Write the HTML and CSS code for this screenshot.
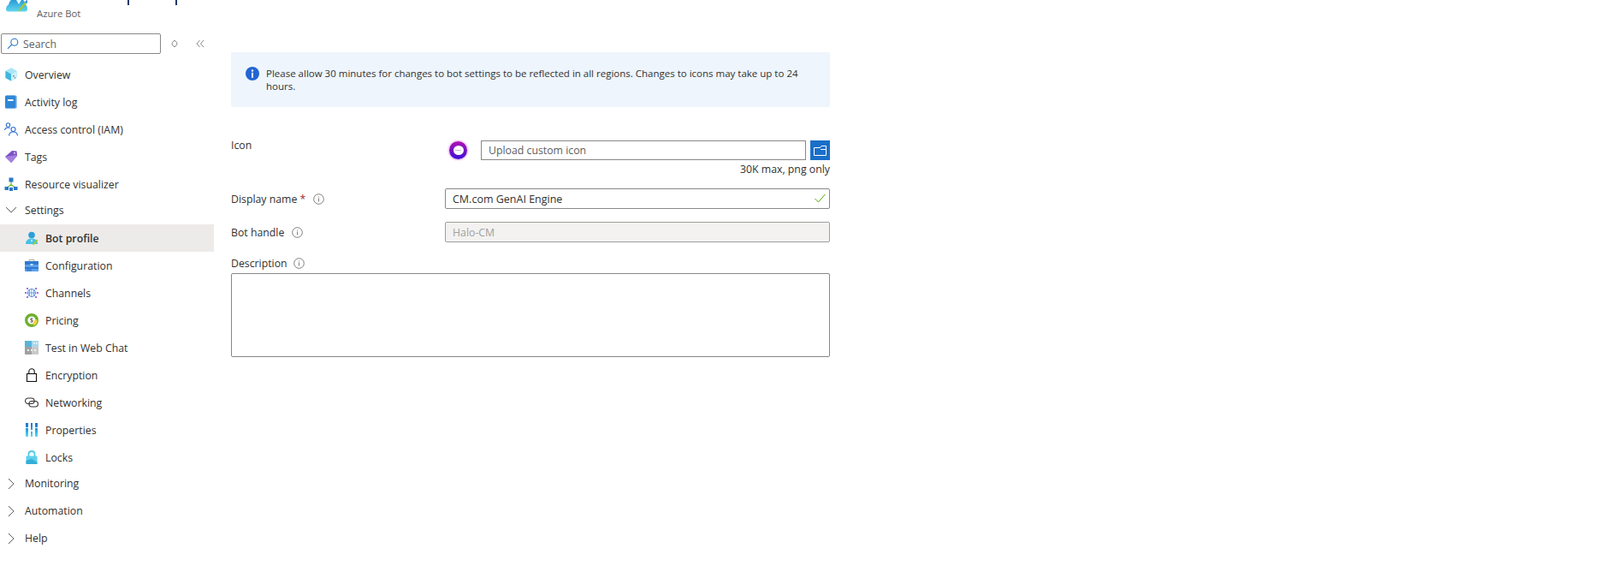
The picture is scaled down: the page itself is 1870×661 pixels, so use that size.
FILE: index.html
```html
<!DOCTYPE html>
<html lang="en">
<head>
<meta charset="utf-8">
<title>Bot profile</title>
<link rel="stylesheet" href="styles.css">
</head>
<body>
<div class="page">
  <aside class="sidebar">
    <div class="ticks"><i class="tick t1"></i><i class="tick t2"></i></div>
    <svg class="logo" width="25" height="14" viewBox="0 0 25 14">
      <defs><linearGradient id="lg" x1="0" y1="0" x2="0" y2="1"><stop offset="0" stop-color="#2a9bd6"/><stop offset="1" stop-color="#62d6ef"/></linearGradient></defs>
      <path d="M2.500 13.500C.5 13.500 0 12 0 10.500 0 8 1.500 6.500 3 5.500 3.500 3 4.500 1 6 0h14c1.500 1 2.500 3 3 5.500 1.500 1 2 3 2 5 0 1.500-.5 3-2.500 3z" fill="url(#lg)"/>
      <path d="M12 0l3 5 3-5z" fill="#e8f8fc"/>
      <path d="M15 11l7-8.500 2 1.800-7 8-2.500.8z" fill="#9ccb3b"/>
      <path d="M22 2.500L24 0l1 .5v2.500l-1 1.300z" fill="#3a8fd8"/>
    </svg>
    <div class="subtitle">Azure Bot</div>
    <div class="search-row">
      <div class="search">
        <svg width="14" height="14" viewBox="0 0 14 14" fill="none" stroke="#2b78c5" stroke-width="1.1"><circle cx="8.8" cy="5.2" r="4"/><path d="M5.8 8L1 12.8"/></svg>
        <span>Search</span>
      </div>
      <svg class="updown" width="8" height="10" viewBox="0 0 8 10" fill="none" stroke="#8a8886"><path d="M4 1L1.200 4v2L4 9l2.800-3V4z"/></svg>
      <svg class="collapse" width="10" height="10" viewBox="0 0 10 10" fill="none" stroke="#8a8886"><path d="M4.500 1L1 5l3.500 4M9 1L5.500 5 9 9"/></svg>
    </div>
    <nav class="nav">
      <a class="item">
        <svg width="16" height="16" viewBox="0 0 16 16"><path d="M8 .5l6.500 3.500v8L8 15.500 1.500 12V4z" fill="#7fd6ee"/><path d="M8 .5L14.500 4 8 7.500 1.500 4z" fill="#a9e6f5"/><path d="M8 7.500L14.500 4v8L8 15.500z" fill="#cdf0f8"/><path d="M1.500 4L8 7.500v8L1.500 12z" fill="#3fb6de"/><path d="M10 9h1.500v1.500H10zM12 11h1v1.500h-1z" fill="#7a7a7a"/></svg>
        <span>Overview</span>
      </a>
      <a class="item">
        <svg width="16" height="16" viewBox="0 0 16 16"><rect x="1" y="0.500" width="14" height="15" rx="1.500" fill="#9fc9ec"/><rect x="1" y="0.500" width="12.500" height="15" rx="1.500" fill="#2f87d6"/><rect x="4" y="5" width="6.500" height="2" fill="#fff"/></svg>
        <span>Activity log</span>
      </a>
      <a class="item">
        <svg width="16" height="16" viewBox="0 0 16 16" fill="none" stroke="#2e6fd0" stroke-width="1.100"><circle cx="4.500" cy="3" r="2.200"/><path d="M0.500 9c.3-2 2-3 4-3 .8 0 1.500.2 2 .5"/><circle cx="10.500" cy="8" r="2.500"/><path d="M5.500 15.500c.2-2.800 2.300-4.500 5-4.500s4.800 1.700 5 4.500"/></svg>
        <span>Access control (IAM)</span>
      </a>
      <a class="item">
        <svg width="16" height="16" viewBox="0 0 16 16"><path d="M1 8l8-7 5.500 0.500 0.500 5.500-7 8z" fill="#7b52c4"/><path d="M1 8l7.500 7 6.500-8-1-1z" fill="#a37fe0"/><circle cx="12" cy="3.800" r="1" fill="#e6dcf7"/></svg>
        <span>Tags</span>
      </a>
      <a class="item">
        <svg width="16" height="16" viewBox="0 0 16 16" fill="none"><path d="M8 4v6M8 8.500L3 12.500M8 8.500l5 4" stroke="#76bc2d" stroke-width="1.200"/><rect x="5.500" y="0.500" width="5" height="5" fill="#2b79c9"/><rect x="0.500" y="11" width="4.500" height="4" fill="#2b79c9"/><rect x="6" y="12" width="4" height="4" fill="#2b79c9"/><rect x="11" y="11" width="4.500" height="4" fill="#2b79c9"/></svg>
        <span>Resource visualizer</span>
      </a>
      <a class="item section">
        <svg width="16" height="16" viewBox="0 0 16 16" fill="none" stroke="#605e5c"><path d="M2 5l6 6 6-6"/></svg>
        <span>Settings</span>
      </a>
      <a class="item sub active">
        <svg width="16" height="16" viewBox="0 0 16 16"><circle cx="8" cy="4.500" r="3.800" fill="#2aa0d8"/><path d="M1 15c0-4 2.500-6.500 7-6.500s7 2.500 7 6.500z" fill="#45c2e8"/><path d="M7 10l1 3.500 1-3.500z" fill="#eaf8fc"/><path d="M9.500 14.500l4.500-5 1.500 1.300-4.500 5-2 .5z" fill="#9ccb3b"/></svg>
        <span>Bot profile</span>
      </a>
      <a class="item sub">
        <svg width="16" height="16" viewBox="0 0 16 16"><path d="M5 3.500V1.500h6v2" fill="none" stroke="#a9a9a9"/><rect y="3" width="16" height="12" fill="#5aa0ee"/><rect y="3" width="16" height="4" fill="#2f79cf"/><rect y="10" width="16" height="2" fill="#2f79cf"/><rect y="12" x="2" width="6" height="3" fill="#3d86da"/><rect x="6.500" y="6" width="3" height="2" fill="#cfe3f8"/></svg>
        <span>Configuration</span>
      </a>
      <a class="item sub">
        <svg width="16" height="16" viewBox="0 0 16 16" fill="none"><g stroke="#b79be8" stroke-width="0.700"><path d="M3 3l10 10M13 3L3 13M.5 8h15"/></g><circle cx="8" cy="8" r="4.500" fill="#fff" stroke="#4f8fe0"/><path d="M3.500 8h9M8 3.500v9M5.500 4.500v7M10.500 4.500v7" stroke="#4f8fe0" stroke-width="0.800"/><g fill="#9a72e6"><rect x="2" y="2" width="2" height="2"/><rect x="12" y="2" width="2" height="2"/><rect x="2" y="12" width="2" height="2"/><rect x="12" y="12" width="2" height="2"/><rect x="0" y="7" width="2" height="2"/><rect x="14" y="7" width="2" height="2"/></g></svg>
        <span>Channels</span>
      </a>
      <a class="item sub">
        <svg width="16" height="16" viewBox="0 0 16 16" fill="none"><circle cx="8" cy="8" r="6.300" stroke="#6fb02f" stroke-width="3.400"/><path d="M12.800 7.500a5 5 0 0 1-3 5.300" stroke="#f5cf3f" stroke-width="3.400"/><path d="M9.500 6H7v2h2v2H6.500" stroke="#3b3a39" stroke-width="0.900"/></svg>
        <span>Pricing</span>
      </a>
      <a class="item sub">
        <svg width="16" height="16" viewBox="0 0 16 16"><rect width="8" height="7" fill="#59b4d9"/><rect x="8" width="8" height="7" fill="#a8d8ec"/><rect y="7" width="8" height="9" fill="#a0a1a2"/><rect x="8" y="7" width="8" height="9" fill="#c9caca"/><path d="M3 10h2v2H3zM7 10h2v2H7zM11 10h2v2h-2zM10 2h2v1.500h-2zM13 2h2v1.500h-2z" fill="#f2f2f2"/></svg>
        <span>Test in Web Chat</span>
      </a>
      <a class="item sub">
        <svg width="16" height="16" viewBox="0 0 16 16" fill="none" stroke="#111" stroke-width="1.100"><rect x="2.500" y="6.500" width="11" height="9"/><path d="M4.800 6.500V3.800C4.800 2 6.200.8 8 .8s3.200 1.200 3.200 3v2.700"/></svg>
        <span>Encryption</span>
      </a>
      <a class="item sub">
        <svg width="16" height="16" viewBox="0 0 16 16" fill="none" stroke="#323130" stroke-width="1.100"><rect x="0.600" y="3" width="10.500" height="6.500" rx="3.200"/><rect x="4.900" y="6.500" width="10.500" height="6.500" rx="3.200"/></svg>
        <span>Networking</span>
      </a>
      <a class="item sub">
        <svg width="16" height="16" viewBox="0 0 16 16"><defs><linearGradient id="pg" x1="0" y1="0" x2="0" y2="1"><stop offset="0" stop-color="#1f6fd0"/><stop offset="0.500" stop-color="#2a9fe0"/><stop offset="1" stop-color="#5fdcf0"/></linearGradient></defs><rect x="1" width="3" height="16" fill="url(#pg)"/><rect x="7" width="2" height="16" fill="url(#pg)"/><rect x="12" width="3" height="16" fill="url(#pg)"/><rect x="7" y="8" width="2" height="2" fill="#e8f5fb"/><rect x="1" y="5" width="3" height="1" fill="#e8f5fb"/><rect x="12" y="5" width="3" height="1" fill="#e8f5fb"/></svg>
        <span>Properties</span>
      </a>
      <a class="item sub">
        <svg width="16" height="16" viewBox="0 0 16 16"><path d="M4.500 7V4.500C4.500 2.300 6 1 8 1s3.500 1.300 3.500 3.500V7" fill="none" stroke="#50cbe8" stroke-width="1.800"/><rect x="1.500" y="6.500" width="13" height="9.500" rx="1" fill="#5dd0ec"/><path d="M1.500 16V12l6.500-2 6.500 4v2z" fill="#34aed8"/></svg>
        <span>Locks</span>
      </a>
      <a class="item closed">
        <svg width="16" height="16" viewBox="0 0 16 16" fill="none" stroke="#605e5c"><path d="M5 2l6 6-6 6"/></svg>
        <span>Monitoring</span>
      </a>
      <a class="item closed">
        <svg width="16" height="16" viewBox="0 0 16 16" fill="none" stroke="#605e5c"><path d="M5 2l6 6-6 6"/></svg>
        <span>Automation</span>
      </a>
      <a class="item closed">
        <svg width="16" height="16" viewBox="0 0 16 16" fill="none" stroke="#605e5c"><path d="M5 2l6 6-6 6"/></svg>
        <span>Help</span>
      </a>
    </nav>
  </aside>
  <main class="main">
    <div class="notice">
      <svg class="notice-icon" width="16" height="16" viewBox="0 0 16 16"><circle cx="8" cy="8" r="8" fill="#2364d2"/><rect x="7" y="6.800" width="2" height="6" fill="#fff"/><circle cx="8" cy="4.500" r="1.200" fill="#fff"/></svg>
      <p>Please allow 30 minutes for changes to bot settings to be reflected in all regions. Changes to icons may take up to 24 hours.</p>
    </div>
    <div class="form">
      <div class="row icon-row">
        <label class="label">Icon</label>
        <div class="field">
          <div class="upload">
            <span class="avatar"><i></i></span>
            <input class="input upload-input" type="text" placeholder="Upload custom icon">
            <button class="browse" type="button" aria-label="Browse">
              <svg width="15" height="12" viewBox="0 0 15 12" fill="none" stroke="#fff"><path d="M.5 2.500h7l1.500-2h5.500v11H.5zM8 4.500h6.500"/></svg>
            </button>
          </div>
          <div class="hint">30K max, png only</div>
        </div>
      </div>
      <div class="row name-row">
        <label class="label">Display name <b class="req">*</b><svg class="info" width="13" height="13" viewBox="0 0 13 13" fill="none" stroke="#605e5c" stroke-width="0.800"><circle cx="6.500" cy="6.500" r="5.800"/><path d="M6.500 5.500v4M6.500 3.500v1"/></svg></label>
        <div class="field">
          <div class="valid-input">
            <input class="input" type="text" value="CM.com GenAI Engine">
            <svg width="13" height="11" viewBox="0 0 13 11" fill="none" stroke="#57a300"><path d="M.5 6l4 4L12.500.8"/></svg>
          </div>
        </div>
      </div>
      <div class="row handle-row">
        <label class="label">Bot handle<svg class="info" width="13" height="13" viewBox="0 0 13 13" fill="none" stroke="#605e5c" stroke-width="0.800"><circle cx="6.500" cy="6.500" r="5.800"/><path d="M6.500 5.500v4M6.500 3.500v1"/></svg></label>
        <div class="field">
          <input class="input disabled" type="text" value="Halo-CM" disabled>
        </div>
      </div>
      <div class="desc">
        <label class="label">Description<svg class="info" width="13" height="13" viewBox="0 0 13 13" fill="none" stroke="#605e5c" stroke-width="0.800"><circle cx="6.500" cy="6.500" r="5.800"/><path d="M6.500 5.500v4M6.500 3.500v1"/></svg></label>
        <textarea class="textarea"></textarea>
      </div>
    </div>
  </main>
</div>
</body>
</html>
```

FILE: styles.css
```css
* { box-sizing: border-box; }
html, body { margin: 0; height: 661px; overflow: hidden; background: #fff; }
body { font-family: "Open Sans", "Noto Sans", sans-serif; font-size: 12.3px; color: #323130; }
.page { display: flex; height: 661px; }

.sidebar { width: 250px; flex: none; }
.ticks { height: 0; position: relative; }
.tick { position: absolute; top: 0; width: 2px; height: 6px; background: #123a6b; }
.t1 { left: 149px; }
.t2 { left: 205px; }
.logo { display: block; margin-left: 7px; }
.subtitle { margin: -6px 0 0 43px; font-size: 11.3px; line-height: 16px; color: #605e5c; height: 16px; }
.search-row { display: flex; align-items: center; margin-top: 15px; padding-left: 1px; height: 24px; }
.search { width: 187px; height: 24px; border: 1px solid #8a8886; border-radius: 2px; display: flex; align-items: center; gap: 5px; padding-left: 6px; color: #605e5c; }
.updown { margin-left: 12px; }
.collapse { margin-left: 21px; }

.nav { margin-top: 8px; }
.item { display: flex; align-items: center; height: 32px; padding-left: 5px; gap: 8px; }
.item svg { flex: none; }
.section { height: 31px; padding-bottom: 3px; }
.closed { padding-bottom: 3px; }
.sub { padding-left: 29px; }
.active { background: #edebe9; font-weight: 600; }

.main { padding: 61px 0 0 20px; width: 720px; }
.notice { width: 700px; height: 64px; background: #eef5fd; border-radius: 2px; display: flex; padding: 17px 30px 0 17px; gap: 8px; }
.notice-icon { flex: none; }
.notice p { margin: 0; font-size: 11.5px; line-height: 15px; }

.form { width: 700px; }
.row { display: grid; grid-template-columns: 250px 450px; }
.label { display: flex; align-items: center; height: 24px; }
.req { color: #a4262c; font-weight: 400; margin-left: 3px; }
.info { margin-left: 7px; }
.name-row .info, .handle-row .info { margin-left: 9px; }
.icon-row { margin-top: 39px; }
.icon-row .label { height: 11px; }
.upload { display: flex; align-items: center; height: 23px; }
.avatar { width: 21px; height: 21px; margin: 0 16px 0 5px; border-radius: 50%; background: linear-gradient(#b012b4, #3a10d8); box-shadow: 0 0 2px 1px #ecb2ec; display: flex; align-items: center; justify-content: center; flex: none; }
.avatar i { width: 12px; height: 11px; border-radius: 50%; background: #fff; display: flex; align-items: center; justify-content: center; }
.avatar i::after { content: ""; width: 7px; height: 1px; background: #c9b4dc; }
.input { font: inherit; color: #323130; height: 100%; width: 100%; border: 1px solid #8a8886; border-radius: 2px; padding: 0 8px; background: #fff; outline: none; }
.input::placeholder { color: #605e5c; opacity: 1; }
.upload-input { width: 380px; border-radius: 0; flex: none; }
.browse { width: 23px; height: 23px; margin-left: 5px; border: 0; padding: 0; background: #1a6fc9; display: flex; align-items: center; justify-content: center; }
.hint { text-align: right; line-height: 16px; margin-top: 3px; }
.name-row { margin-top: 14px; }
.valid-input { position: relative; height: 24px; }
.valid-input .input { font-size: 12.5px; }
.valid-input svg { position: absolute; right: 5px; top: 6px; }
.handle-row { margin-top: 15px; }
.handle-row .field { height: 24px; }
.disabled { background: #f3f2f1; border-color: #a19f9d; color: #a19f9d; }
.desc { margin-top: 14px; }
.desc .label { height: 21px; }
.textarea { display: block; width: 700px; height: 98px; margin-top: 1px; border: 1px solid #8a8886; border-radius: 2px; resize: none; outline: none; font: inherit; }
```
